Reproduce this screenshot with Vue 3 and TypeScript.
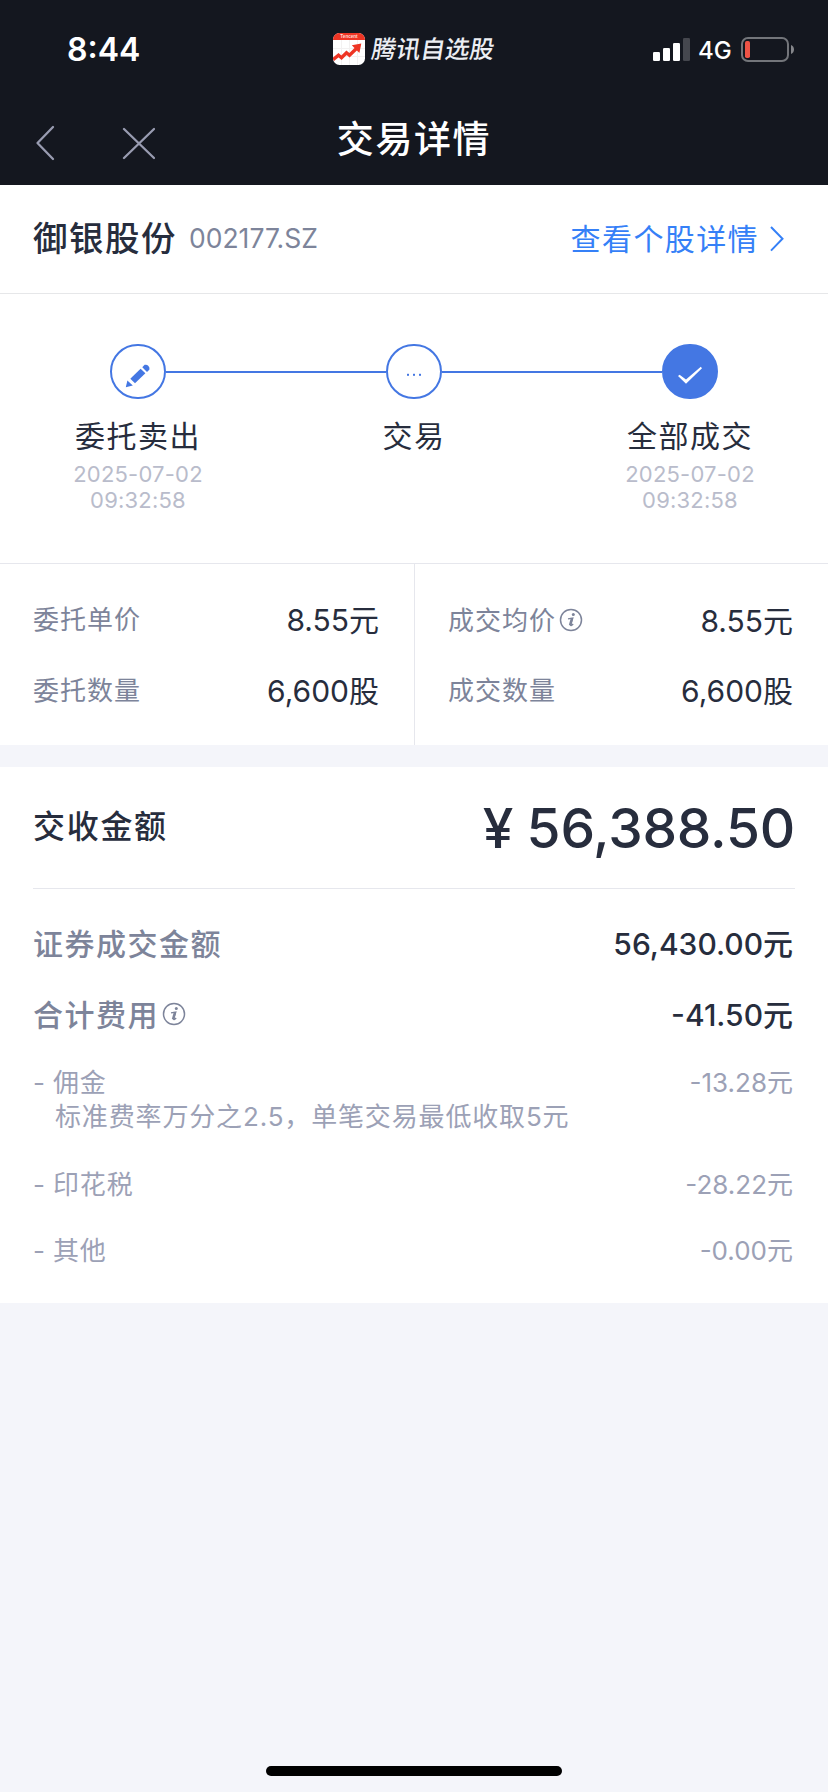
<script setup lang="ts">
interface Step {
  key: 'pencil' | 'dots' | 'check'
  title: string
  date?: string
  time?: string
}
interface Fee {
  name: string
  value: string
  note?: string
}

const steps: Step[] = [
  { key: 'pencil', title: '委托卖出', date: '2025-07-02', time: '09:32:58' },
  { key: 'dots', title: '交易' },
  { key: 'check', title: '全部成交', date: '2025-07-02', time: '09:32:58' },
]

const columns = [
  [
    { label: '委托单价', value: '8.55元', info: false },
    { label: '委托数量', value: '6,600股', info: false },
  ],
  [
    { label: '成交均价', value: '8.55元', info: true },
    { label: '成交数量', value: '6,600股', info: false },
  ],
]

const totals = [
  { label: '证券成交金额', value: '56,430.00元', info: false },
  { label: '合计费用', value: '-41.50元', info: true },
]

const fees: Fee[] = [
  { name: '佣金', value: '-13.28元', note: '标准费率万分之2.5，单笔交易最低收取5元' },
  { name: '印花税', value: '-28.22元' },
  { name: '其他', value: '-0.00元' },
]
</script>

<template>
  <div class="screen">
    <header class="top">
      <div class="status">
        <span class="clock">8:44</span>
        <div class="brand">
          <svg class="brand-logo" width="32" height="32" viewBox="0 0 32 32">
            <defs>
              <clipPath id="logo-clip"><rect width="32" height="32" rx="6.5" /></clipPath>
            </defs>
            <g clip-path="url(#logo-clip)">
              <rect width="32" height="32" fill="#fff" />
              <path d="M8.5 7v25M16.5 7v25M24.5 7v25M0 15.5h32M0 23.5h32" stroke="#f3f1f1" stroke-width="1" />
              <rect width="32" height="7" fill="#ee3524" />
              <path d="M0 26.800 L5.500 22.300 L8.500 24.800 L13.500 19.800 L16.500 22.300 L23.500 15.500" fill="none" stroke="#ee3524" stroke-width="3.400" />
              <path d="M28.300 10.600 L18.800 12.200 L26.400 20 Z" fill="#ee3524" />
            </g>
            <text x="16" y="5.2" text-anchor="middle" class="logo-text">Tencent</text>
          </svg>
          <span class="brand-name">腾讯自选股</span>
        </div>
        <div class="signals">
          <svg width="37" height="23" viewBox="0 0 37 23">
            <rect x="0" y="14" width="7" height="9" rx="1.3" fill="#fff" />
            <rect x="10" y="10" width="7" height="13" rx="1.3" fill="#fff" />
            <rect x="20" y="5" width="7" height="18" rx="1.3" fill="#fff" />
            <rect x="30" y="0" width="7" height="23" rx="1.3" fill="#45474e" />
          </svg>
          <span class="network">4G</span>
          <svg width="53" height="25" viewBox="0 0 53 25">
            <rect x="1" y="1" width="46" height="23" rx="6" fill="none" stroke="#73757a" stroke-width="2" />
            <rect x="4" y="4" width="5" height="17" rx="1.8" fill="#ee5346" />
            <path d="M50 8c4 1.600 4 7.400 0 9z" fill="#85868b" />
          </svg>
        </div>
      </div>
      <nav class="nav">
        <svg class="nav-icons" width="122" height="36" viewBox="0 0 122 36" fill="none" stroke="#999cb1" stroke-width="2.300" stroke-linecap="round" stroke-linejoin="round">
          <path d="M20 2 L4.500 18 L20 34" />
          <path d="M91 4 L121 33 M121 4 L91 33" />
        </svg>
        <h1 class="title">交易详情</h1>
      </nav>
    </header>

    <section class="stock">
      <span class="stock-name">御银股份</span>
      <span class="stock-code">002177.SZ</span>
      <a class="stock-link">查看个股详情</a>
      <svg class="stock-arrow" width="14" height="26" viewBox="0 0 14 26" fill="none" stroke="#3580f7" stroke-width="2">
        <path d="M1 1 L12.500 12.800 L1 24.600" />
      </svg>
    </section>

    <section class="steps">
      <div v-for="s in steps" :key="s.key" class="step">
        <div class="rail">
          <i class="line" :class="{ hidden: s.key === 'pencil' }"></i>
          <div class="node" :class="s.key">
            <svg width="56" height="55" viewBox="0 0 56 55">
              <g v-if="s.key === 'pencil'" fill="#4477e3">
                <path d="M15.800 43.200 L17.400 36.400 L22.800 41.500 Z" />
                <path d="M20.300 34.800 L30.600 24.700 L35.400 29.300 L25 39.200 Z" />
                <path d="M32.300 23.200 L34.600 20.800 A3.900 3.900 0 0 1 39.300 25.800 L37 28 Z" />
              </g>
              <g v-else-if="s.key === 'dots'" fill="#4477e3">
                <rect x="21" y="29.800" width="2" height="2" />
                <rect x="27" y="29.800" width="2" height="2" />
                <rect x="33" y="29.800" width="2" height="2" />
              </g>
              <path v-else d="M16 32 L17.600 30.700 L24 35.500 L38.800 22.800 L40 24.200 L24 39.800 Z" fill="#fff" />
            </svg>
          </div>
          <i class="line" :class="{ hidden: s.key === 'check' }"></i>
        </div>
        <div class="step-title">{{ s.title }}</div>
        <div v-if="s.date" class="step-date">{{ s.date }}<br />{{ s.time }}</div>
      </div>
    </section>

    <section class="grid">
      <div v-for="(col, ci) in columns" :key="ci" class="col">
        <div v-for="r in col" :key="r.label" class="cell" :class="{ shifted: r.info }">
          <span class="label">{{ r.label }}</span>
          <svg v-if="r.info" class="info" width="24" height="24" viewBox="0 0 24 24">
            <circle cx="12" cy="12" r="10.500" fill="none" stroke="#7d849a" stroke-width="1.500" />
            <circle cx="14.300" cy="6.500" r="1.500" fill="#7d849a" />
            <path d="M9 10.900 L13.800 10 L11.600 17.300 Q12 18 14.200 16" fill="none" stroke="#7d849a" stroke-width="1.300" />
            <path d="M13 10.200 L11 17.300" stroke="#7d849a" stroke-width="2.400" />
          </svg>
          <span class="value">{{ r.value }}</span>
        </div>
      </div>
    </section>

    <section class="settle">
      <div class="amount">
        <span class="amount-label">交收金额</span>
        <span class="amount-value">¥ 56,388.50</span>
      </div>
      <div v-for="t in totals" :key="t.label" class="total">
        <span class="total-label">{{ t.label }}</span>
        <svg v-if="t.info" class="info" width="24" height="24" viewBox="0 0 24 24">
          <circle cx="12" cy="12" r="10.500" fill="none" stroke="#7d849a" stroke-width="1.500" />
          <circle cx="14.300" cy="6.500" r="1.500" fill="#7d849a" />
          <path d="M9 10.900 L13.800 10 L11.600 17.300 Q12 18 14.200 16" fill="none" stroke="#7d849a" stroke-width="1.300" />
          <path d="M13 10.200 L11 17.300" stroke="#7d849a" stroke-width="2.400" />
        </svg>
        <span class="total-value">{{ t.value }}</span>
      </div>
      <div class="fees">
        <div v-for="f in fees" :key="f.name" class="fee">
          <div class="fee-row">
            <span class="dash">-</span>
            <span class="fee-name">{{ f.name }}</span>
            <span class="fee-value">{{ f.value }}</span>
          </div>
          <div v-if="f.note" class="note">{{ f.note }}</div>
        </div>
      </div>
    </section>

    <footer class="home"><div class="home-bar"></div></footer>
  </div>
</template>

<style>
body {
  background: #f4f5fa;
}
</style>

<style scoped>
.screen {
  display: flex;
  flex-direction: column;
  width: 828px;
  height: 1792px;
  overflow: hidden;
  background: #f4f5fa;
  color: #272d3d;
  font-family: Inter, "Noto Sans CJK SC", sans-serif;
  line-height: 1.2;
  white-space: nowrap;
}
svg {
  display: block;
  flex: none;
}
.top {
  height: 185px;
  background: #14171f;
  color: #fff;
}
.status {
  display: grid;
  grid-template-columns: 333px 1fr 175px;
  align-items: center;
  height: 97px;
}
.clock {
  padding-left: 67px;
  font-size: 32px;
  line-height: 40px;
  font-weight: 600;
  margin-top: 2px;
}
.brand {
  display: flex;
  align-items: center;
}
.logo-text {
  font: 700 4.600px "Liberation Sans", sans-serif;
  fill: #ffd9d4;
}
.brand-name {
  margin-left: 7px;
  font-size: 24.500px;
  line-height: 36px;
  font-weight: 500;
  color: #eceef3;
  transform: skewX(-9deg);
}
.signals {
  display: flex;
  align-items: center;
  margin-top: 2px;
}
.network {
  width: 42px;
  margin-left: 8px;
  font-size: 24px;
  line-height: 30px;
  font-weight: 500;
  margin-right: 1px;
  margin-top: 2px;
}
.nav {
  display: grid;
  grid-template-columns: 1fr auto 1fr;
  align-items: center;
  height: 84px;
}
.nav-icons {
  margin: 8px 0 0 33px;
}
.title {
  margin: 2px 0 0;
  font-size: 37px;
  line-height: 50px;
  letter-spacing: 1.600px;
  font-weight: 500;
}
.stock {
  display: flex;
  align-items: center;
  height: 108px;
  padding: 0 44px 0 33px;
  background: #fff;
  border-bottom: 1px solid #e6e7e9;
}
.stock-name {
  font-size: 34.500px;
  letter-spacing: 1.500px;
  font-weight: 500;
}
.stock-code {
  margin-left: 12px;
  font-size: 26.500px;
  color: #7d849a;
}
.stock-link {
  margin-left: auto;
  font-size: 30px;
  letter-spacing: 1.400px;
  color: #3580f7;
}
.stock-arrow {
  margin-left: 11px;
}
.steps {
  display: grid;
  grid-template-columns: repeat(3, 276px);
  height: 219px;
  padding-top: 50px;
  background: #fff;
  border-bottom: 1px solid #e6e7ed;
}
.rail {
  display: flex;
  align-items: center;
}
.line {
  flex: 1;
  height: 2px;
  margin-top: 1px;
  background: #4477e3;
}
.line.hidden {
  visibility: hidden;
}
.node {
  box-sizing: border-box;
  display: flex;
  align-items: center;
  justify-content: center;
  width: 56px;
  height: 55px;
  border: 2px solid #4477e3;
  border-radius: 28px;
}
.node.check {
  background: #4477e3;
}
.step-title {
  margin-top: 17px;
  text-align: center;
  font-size: 30px;
  line-height: 40px;
  letter-spacing: 1.500px;
}
.step-date {
  margin-top: 5px;
  text-align: center;
  font-size: 22px;
  line-height: 26px;
  letter-spacing: 0.200px;
  color: #b9bccb;
}
.grid {
  display: grid;
  grid-template-columns: 1fr 1fr;
  height: 181px;
  background: #fff;
}
.col {
  padding: 20px 35px 0 33px;
}
.col + .col {
  border-left: 1px solid #e6e7ed;
}
.cell {
  display: flex;
  align-items: center;
  height: 71px;
}
.cell.shifted > span {
  margin-top: 2px;
}
.label {
  font-size: 26px;
  letter-spacing: 1px;
  color: #7d849a;
}
.info {
  margin-left: 3px;
}
.value {
  margin-left: auto;
  font-size: 30px;
}
.settle {
  height: 536px;
  margin-top: 22px;
  background: #fff;
}
.amount {
  display: flex;
  align-items: center;
  justify-content: space-between;
  height: 121px;
  margin: 0 33px 19px;
  border-bottom: 1px solid #e6e7ed;
}
.amount-label {
  font-size: 32px;
  letter-spacing: 1.700px;
  font-weight: 500;
}
.amount-value {
  font-size: 55px;
  font-weight: 500;
  letter-spacing: -0.200px;
  word-spacing: -1px;
}
.total {
  display: flex;
  align-items: center;
  height: 71px;
  padding: 0 35px 0 33px;
}
.total-label {
  font-size: 30px;
  letter-spacing: 1.500px;
  font-weight: 500;
  color: #7d849a;
}
.total .info {
  margin-bottom: 2px;
}
.total-value {
  margin-left: auto;
  font-size: 30px;
  font-weight: 500;
}
.fees {
  display: flex;
  flex-direction: column;
  gap: 32px;
  padding: 16px 35px 0 33px;
  font-size: 26px;
  line-height: 34px;
  letter-spacing: 0.850px;
  color: #9ca1b6;
}
.fee-row {
  display: flex;
}
.dash {
  width: 20px;
}
.fee-value {
  margin-left: auto;
  letter-spacing: 0;
}
.note {
  padding: 0 0 2px 22px;
}
.home {
  display: flex;
  justify-content: center;
  margin-top: auto;
  padding-bottom: 16px;
}
.home-bar {
  width: 296px;
  height: 10px;
  border-radius: 5px;
  background: #000;
}
</style>
